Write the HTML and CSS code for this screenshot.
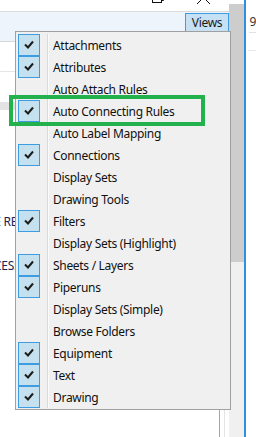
FILE: index.html
```html
<!DOCTYPE HTML>
<html>
  <head>
    <meta charset="UTF-8">
    <link rel="stylesheet" href="styles.css">
  </head>
  <body>
    <div class="screen">
      <div class="app">
        <div class="titlebar">
          <svg class="caption" width="229" height="11" viewBox="0 0 229 11">
            <rect x="152.5" y="-6.5" width="9" height="9" fill="none" stroke="#111" stroke-width="1"/>
            <polyline points="161.5,0.5 163.5,0.5 163.5,-8" fill="none" stroke="#111" stroke-width="1"/>
            <line x1="197" y1="4" x2="204" y2="-3" stroke="#111" stroke-width="1"/>
            <line x1="210" y1="4" x2="203" y2="-3" stroke="#111" stroke-width="1"/>
          </svg>
        </div>
        <div class="toolbar">
          <div class="views-btn">Views</div>
        </div>
        <div class="content">
          <div class="row row-a"></div>
          <div class="row row-b"></div>
          <div class="row row-hl"></div>
          <div class="row-text t1">CE REF</div>
          <div class="row-text t2">CES:</div>
          <div class="bottom-lines"></div>
        </div>
      </div>
      <div class="vscroll">
        <div class="thumb"></div>
      </div>
      <div class="divider"></div>
      <div class="side">
        <div class="side-num">9</div>
        <div class="side-line"></div>
      </div>
    </div>

    <div class="menu">
      <div class="item"><span class="chk"><svg width="20" height="20" viewBox="0 0 20 20"><polyline points="6,9.5 9,12.5 14,6.5"/></svg></span><span class="lbl">Attachments</span></div>
      <div class="item"><span class="chk"><svg width="20" height="20" viewBox="0 0 20 20"><polyline points="6,9.5 9,12.5 14,6.5"/></svg></span><span class="lbl">Attributes</span></div>
      <div class="item"><span class="nochk"></span><span class="lbl">Auto Attach Rules</span></div>
      <div class="item"><span class="chk"><svg width="20" height="20" viewBox="0 0 20 20"><polyline points="6,9.5 9,12.5 14,6.5"/></svg></span><span class="lbl">Auto Connecting Rules</span></div>
      <div class="item"><span class="nochk"></span><span class="lbl">Auto Label Mapping</span></div>
      <div class="item"><span class="chk"><svg width="20" height="20" viewBox="0 0 20 20"><polyline points="6,9.5 9,12.5 14,6.5"/></svg></span><span class="lbl">Connections</span></div>
      <div class="item"><span class="nochk"></span><span class="lbl">Display Sets</span></div>
      <div class="item"><span class="nochk"></span><span class="lbl">Drawing Tools</span></div>
      <div class="item"><span class="chk"><svg width="20" height="20" viewBox="0 0 20 20"><polyline points="6,9.5 9,12.5 14,6.5"/></svg></span><span class="lbl">Filters</span></div>
      <div class="item"><span class="nochk"></span><span class="lbl">Display Sets (Highlight)</span></div>
      <div class="item"><span class="chk"><svg width="20" height="20" viewBox="0 0 20 20"><polyline points="6,9.5 9,12.5 14,6.5"/></svg></span><span class="lbl">Sheets / Layers</span></div>
      <div class="item"><span class="chk"><svg width="20" height="20" viewBox="0 0 20 20"><polyline points="6,9.5 9,12.5 14,6.5"/></svg></span><span class="lbl">Piperuns</span></div>
      <div class="item"><span class="nochk"></span><span class="lbl">Display Sets (Simple)</span></div>
      <div class="item"><span class="nochk"></span><span class="lbl">Browse Folders</span></div>
      <div class="item"><span class="chk"><svg width="20" height="20" viewBox="0 0 20 20"><polyline points="6,9.5 9,12.5 14,6.5"/></svg></span><span class="lbl">Equipment</span></div>
      <div class="item"><span class="chk"><svg width="20" height="20" viewBox="0 0 20 20"><polyline points="6,9.5 9,12.5 14,6.5"/></svg></span><span class="lbl">Text</span></div>
      <div class="item"><span class="chk"><svg width="20" height="20" viewBox="0 0 20 20"><polyline points="6,9.5 9,12.5 14,6.5"/></svg></span><span class="lbl">Drawing</span></div>
    </div>

    <!-- annotation box drawn over the screenshot -->
    <div class="callout"></div>
  </body>
</html>
```

FILE: styles.css
```css
body {
  margin: 0;
  width: 256px;
  height: 437px;
  overflow: hidden;
  background: #fff;
  font-family: "Noto Sans", "Liberation Sans", sans-serif;
  font-size: 12px;
  letter-spacing: -0.3px;
  color: #000;
}
.screen {
  display: flex;
  height: 437px;
}
.app {
  width: 229px;
  display: flex;
  flex-direction: column;
}
.titlebar {
  height: 11px;
  background: #fff;
}
.caption {
  display: block;
}
.toolbar {
  height: 28px;
  border-top: 1px solid #dcdcdc;
  border-bottom: 1px solid #d6d6d6;
  background: #edf4fc;
  display: flex;
  justify-content: flex-end;
  align-items: flex-start;
  padding-top: 1px;
  box-sizing: content-box;
}
.views-btn {
  height: 17px;
  width: 42px;
  border: 1px solid #3d9de0;
  background: #c6e1f3;
  text-align: center;
  line-height: 17px;
  color: #1a1a1a;
}
.content {
  flex: 1;
  display: flex;
  flex-direction: column;
}
.row-a {
  height: 29px;
  border-bottom: 1px solid #e6e6e6;
}
.row-b {
  height: 30px;
}
.row-hl {
  height: 8px;
  background: #e3e3e3;
}
.row-text {
  color: #1b2450;
  height: 22px;
  line-height: 22px;
  white-space: nowrap;
}
.t1 {
  margin-top: 101px;
  margin-left: -13px;
}
.t2 {
  margin-top: 22px;
  margin-left: -6px;
}
.bottom-lines {
  margin-top: auto;
  height: 27px;
  margin-left: 219px;
  width: 6px;
  border-left: 1px solid #a5a5a5;
  border-right: 1px solid #e4e4e4;
  box-sizing: border-box;
}
.vscroll {
  width: 16px;
  background: #f0f0f0;
  padding-top: 4px;
  box-shadow: inset 0 4px 0 #fff;
}
.thumb {
  height: 258px;
  background: #cdcdcd;
}
.divider {
  width: 2px;
  background: #2f8fe0;
}
.side {
  flex: 1;
  padding-left: 2px;
}
.side-num {
  height: 20px;
  padding-top: 12px;
  line-height: 20px;
  color: #333;
  border-bottom: 1px solid #e2e2e2;
  margin-left: 1px;
}
.side-line {
  height: 17px;
  border-bottom: 1px solid #e8e8e8;
}
.menu {
  position: absolute;
  left: 15px;
  top: 31px;
  width: 212px;
  border: 1px solid #a0a0a0;
  padding: 2px 0 1px 2px;
  background-color: #f0f0f0;
  background-image: linear-gradient(to right, transparent 31px, #dadada 31px, #dadada 32px, #fbfbfb 32px, #fbfbfb 33px, transparent 33px);
  background-size: 100% 374px;
  background-position: 0 2px;
  background-repeat: no-repeat;
}
.item {
  height: 22px;
  display: flex;
  align-items: center;
}
.chk, .nochk {
  width: 20px;
  height: 20px;
  flex: none;
}
.chk {
  border: 1px solid #3d9de0;
  background: #c5e1ef;
}
.nochk {
  border: 1px solid transparent;
}
.chk svg {
  display: block;
}
.chk polyline {
  fill: none;
  stroke: #1c1c1c;
  stroke-width: 2;
}
.lbl {
  margin-left: 13px;
  color: #111;
  white-space: nowrap;
}
.callout {
  position: absolute;
  left: 9px;
  top: 95px;
  width: 188px;
  height: 23px;
  border: 4px solid #22b14c;
}
```
